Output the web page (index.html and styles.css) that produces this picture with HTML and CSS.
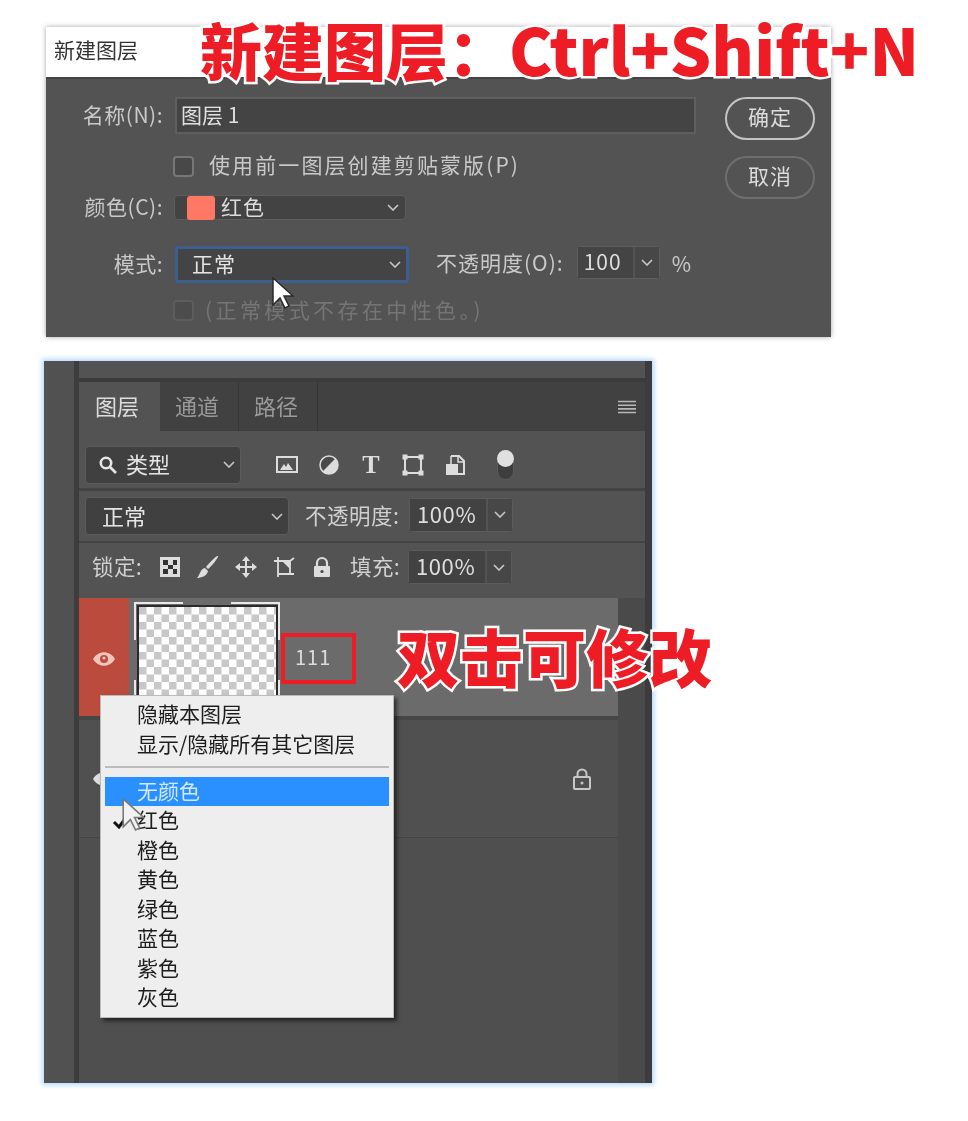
FILE: index.html
```html
<!DOCTYPE html>
<html lang="zh-CN">
<head>
<meta charset="utf-8">
<title>新建图层</title>
<link rel="stylesheet" href="styles.css">
</head>
<body>
<main class="page">
  <section class="dialog">
    <header class="dialog-title">新建图层</header>
    <div class="dialog-body">
      <div class="form">
        <div class="row row-name">
          <label class="label">名称(N):</label>
          <div class="text-input">图层 1</div>
        </div>
        <div class="row row-check">
          <span class="checkbox"></span>
          <span class="check-text">使用前一图层创建剪贴蒙版(P)</span>
        </div>
        <div class="row row-color">
          <label class="label">颜色(C):</label>
          <div class="color-select">
            <span class="swatch"></span><span class="color-name">红色</span>
            <svg class="chev" viewBox="0 0 12 7"><path d="M1 1l5 5 5-5"/></svg>
          </div>
        </div>
        <div class="row row-mode">
          <label class="label">模式:</label>
          <div class="mode-select">
            <span>正常</span>
            <svg class="chev" viewBox="0 0 12 7"><path d="M1 1l5 5 5-5"/></svg>
          </div>
          <span class="opacity-label">不透明度(O):</span>
          <div class="num-box dlg-num">
            <span class="num">100</span>
            <span class="num-arrow"><svg class="chev" viewBox="0 0 12 7"><path d="M1 1l5 5 5-5"/></svg></span>
          </div>
          <span class="percent">%</span>
        </div>
        <div class="row row-disabled">
          <span class="checkbox checkbox-off"></span>
          <span class="disabled-text">(正常模式不存在中性色。)</span>
        </div>
      </div>
      <div class="buttons">
        <div class="btn btn-primary">确定</div>
        <div class="btn">取消</div>
      </div>
    </div>
    <svg class="cursor cursor-dialog" viewBox="0 0 22 33"><path d="M1 1v27l7-7 5 10 4-2-5-10h9z"/></svg>
  </section>

  <section class="panel">
    <div class="strip"></div>
    <div class="strip-line"></div>
    <div class="panel-main">
      <div class="panel-top"></div>
      <nav class="tabs">
        <span class="tab tab-on">图层</span>
        <span class="tab">通道</span>
        <span class="tab">路径</span>
        <svg class="menu-icon" viewBox="0 0 18 14"><path d="M0 1.500h18M0 5.200h18M0 8.900h18M0 12.500h18"/></svg>
      </nav>
      <div class="p-row p-filter">
        <div class="p-select filter-select">
          <svg class="search" viewBox="0 0 20 20"><circle cx="8" cy="8" r="5.200"/><path d="M12 12l6 6"/></svg>
          <span>类型</span>
          <svg class="chev" viewBox="0 0 12 7"><path d="M1 1l5 5 5-5"/></svg>
        </div>
        <div class="filter-icons">
          <svg class="ficon" viewBox="0 0 24 24"><rect x="2" y="4" width="20" height="15" fill="none" stroke="#ddd" stroke-width="2"/><path d="M5 17l4-6 2 3 2-4 5 7z" fill="#ddd"/></svg>
          <svg class="ficon" viewBox="0 0 24 24"><circle cx="12" cy="12" r="9" fill="#ddd"/><path d="M18.400 5.600A9 9 0 0 0 5.600 18.400z" fill="#4a4a4a"/><circle cx="12" cy="12" r="9" fill="none" stroke="#ddd" stroke-width="1.500"/></svg>
          <span class="type-t">T</span>
          <svg class="ficon" viewBox="0 0 24 24"><rect x="4" y="4" width="16" height="16" fill="none" stroke="#ddd" stroke-width="2"/><rect x="1.500" y="1.500" width="5" height="5" fill="#ddd"/><rect x="17.500" y="1.500" width="5" height="5" fill="#ddd"/><rect x="1.500" y="17.500" width="5" height="5" fill="#ddd"/><rect x="17.500" y="17.500" width="5" height="5" fill="#ddd"/></svg>
          <svg class="ficon" viewBox="0 0 24 24"><path d="M8 3h8l5 5v13h-6" fill="none" stroke="#ddd" stroke-width="2"/><path d="M8 3v8M15 3v6h6" fill="none" stroke="#ddd" stroke-width="1.500"/><rect x="3" y="11" width="12" height="11" fill="#ddd"/></svg>
          <div class="toggle"><span class="toggle-dot"></span></div>
        </div>
      </div>
      <div class="p-row p-blend">
        <div class="p-select blend-select">
          <span>正常</span>
          <svg class="chev" viewBox="0 0 12 7"><path d="M1 1l5 5 5-5"/></svg>
        </div>
        <span class="p-label blend-label">不透明度:</span>
        <div class="num-box p-num">
          <span class="num">100%</span>
          <span class="num-arrow"><svg class="chev" viewBox="0 0 12 7"><path d="M1 1l5 5 5-5"/></svg></span>
        </div>
      </div>
      <div class="p-row p-lock">
        <span class="p-label lock-label">锁定:</span>
        <div class="lock-icons">
          <svg class="licon" viewBox="0 0 22 22"><rect x="1" y="1" width="20" height="20" fill="#ddd"/><path d="M4 4h5v5H4zM14 4h4v5h-4zM9 9h5v4H9zM4 13h5v5H4zM14 13h4v5h-4z" fill="#333"/></svg>
          <svg class="licon" viewBox="0 0 22 22"><path d="M21 0c1 1-6 10-10 13l-2-2C12 7 20-1 21 0z" fill="#ddd"/><path d="M8 12l3 3c-1 5-7 7-11 7 3-3 3-9 8-10z" fill="#ddd"/></svg>
          <svg class="licon" viewBox="0 0 22 22"><path d="M11 2v18M2 11h18" stroke="#ddd" stroke-width="2" fill="none"/><path d="M11 0l4 5H7zM11 22l-4-5h8zM0 11l5-4v8zM22 11l-5 4V7z" fill="#ddd"/></svg>
          <svg class="licon" viewBox="0 0 22 22"><path d="M1 5h16v13H5V1M5 18v3M17 18h4M17 5l4-3" fill="none" stroke="#ddd" stroke-width="1.800"/><path d="M9 5l8 8V5z" fill="#ddd"/></svg>
          <svg class="licon" viewBox="0 0 22 22"><path d="M6 10V7a5 5 0 0 1 10 0v3" fill="none" stroke="#ddd" stroke-width="2.200"/><rect x="3" y="10" width="16" height="11" rx="1" fill="#ddd"/><circle cx="11" cy="15.500" r="1.600" fill="#444"/></svg>
        </div>
        <span class="p-label fill-label">填充:</span>
        <div class="num-box p-num">
          <span class="num">100%</span>
          <span class="num-arrow"><svg class="chev" viewBox="0 0 12 7"><path d="M1 1l5 5 5-5"/></svg></span>
        </div>
      </div>
      <div class="layers">
        <div class="layer-list">
          <div class="layer layer-on">
            <div class="eye-cell">
              <svg class="eye eye-main" viewBox="0 0 24 16"><path d="M1 8c5-9 17-9 22 0-5 9-17 9-22 0z" fill="#eec4bc"/><circle cx="12" cy="8" r="4" fill="#bb4b3c"/><circle cx="12" cy="7" r="1.600" fill="#eec4bc"/></svg>
            </div>
            <svg class="thumb" viewBox="0 0 146 118">
              <defs>
                <pattern id="chk" width="15" height="15" patternUnits="userSpaceOnUse" x="5" y="9">
                  <rect width="15" height="15" fill="#fff"/>
                  <rect width="7.500" height="7.500" fill="#c8c8c8"/>
                  <rect x="7.500" y="7.500" width="7.500" height="7.500" fill="#c8c8c8"/>
                </pattern>
              </defs>
              <rect x="4" y="8" width="139" height="110" fill="url(#chk)" stroke="#2a2a2a" stroke-width="2"/>
              <path d="M1 42V5h48M97 5h48v37M1 82v36M145 82v36" fill="none" stroke="#e8e8e8" stroke-width="2"/>
            </svg>
            <div class="name-box"><span>111</span></div>
          </div>
          <div class="layer layer-off">
            <div class="eye-cell eye-plain">
              <svg class="eye" viewBox="0 0 24 16"><path d="M1 8c5-9 17-9 22 0-5 9-17 9-22 0z" fill="#ddd"/></svg>
            </div>
            <svg class="row-lock" viewBox="0 0 20 24"><path d="M5.500 10V7a4.500 4.500 0 0 1 9 0v3" fill="none" stroke="#c8c8c8" stroke-width="2"/><rect x="2" y="10" width="16" height="12" rx="1" fill="none" stroke="#c8c8c8" stroke-width="2"/><circle cx="10" cy="16" r="1.500" fill="#c8c8c8"/></svg>
          </div>
        </div>
      </div>
    </div>
    <div class="strip-right"></div>

    <div class="ctx-menu">
      <div class="ctx-item">隐藏本图层</div>
      <div class="ctx-item">显示/隐藏所有其它图层</div>
      <div class="ctx-sep"></div>
      <div class="ctx-item ctx-hover">无颜色</div>
      <div class="ctx-item ctx-checked">
        <svg class="tick" viewBox="0 0 18 16"><path d="M2 9l5 5L16 2" /></svg>红色
      </div>
      <div class="ctx-item">橙色</div>
      <div class="ctx-item">黄色</div>
      <div class="ctx-item">绿色</div>
      <div class="ctx-item">蓝色</div>
      <div class="ctx-item">紫色</div>
      <div class="ctx-item">灰色</div>
    </div>
    <svg class="cursor cursor-menu" viewBox="0 0 22 33"><path d="M1 1v27l7-7 5 10 4-2-5-10h9z"/></svg>
  </section>

  <div class="big big-title">新建图层：<span class="big-latin">Ctrl+Shift+N</span></div>
  <div class="big big-note">双击可修改</div>
</main>
</body>
</html>
```

FILE: styles.css
```css
* { box-sizing: border-box; }
html, body { margin: 0; background: #fff; }
body {
  font-family: "Noto Sans CJK SC", "Noto Sans", sans-serif;
  overflow: hidden;
}
.page {
  position: relative;
  width: 968px;
  height: 1121px;
  padding: 27px 0 0 44px;
}

/* dialog */
.dialog {
  position: relative;
  width: 785px;
  height: 310px;
  margin-left: 2px;
  background: #535353;
  box-shadow: 0 0 5px rgba(0, 0, 0, .35);
  color: #c9c9c9;
  font-size: 21px;
  filter: blur(.45px);
}
.dialog-title {
  height: 52px;
  padding-left: 8px;
  background: #fff;
  border-bottom: 2px solid #444;
  color: #333;
  font-size: 21px;
  line-height: 44px;
}
.dialog-body {
  display: flex;
  padding-top: 18px;
}
.form { width: 679px; }
.row { display: flex; align-items: center; }
.label {
  width: 117px;
  margin-right: 12px;
  padding-bottom: 4px;
  text-align: right;
  letter-spacing: .5px;
  white-space: nowrap;
}
.text-input {
  width: 521px;
  height: 37px;
  padding-left: 4px;
  background: #444;
  border: 2px solid #5f5f5f;
  color: #e0e0e0;
  line-height: 30px;
}
.row-check { height: 20px; margin-top: 22px; padding-left: 127px; }
.checkbox {
  width: 21px;
  height: 21px;
  border: 2px solid #777;
  border-radius: 4px;
  background: #484848;
  flex: none;
}
.check-text { margin-left: 15px; padding-bottom: 4px; letter-spacing: 2.1px; white-space: nowrap; }
.row-color { height: 25px; margin-top: 19px; }
.color-select {
  position: relative;
  display: flex;
  align-items: center;
  width: 232px;
  height: 25px;
  margin-left: -1px;
  padding-left: 12px;
  background: #434343;
  border: 1px solid #5c5c5c;
  border-radius: 4px;
  color: #dcdcdc;
}
.swatch {
  width: 28px;
  height: 24px;
  border-radius: 3px;
  background: #ff7866;
}
.color-name { margin-left: 6px; padding-bottom: 4px; letter-spacing: 1px; }
.chev {
  width: 12px;
  height: 7px;
  fill: none;
  stroke: #c8c8c8;
  stroke-width: 1.6;
  flex: none;
}
.color-select .chev { margin-left: auto; margin-right: 6px; }
.row-mode { height: 37px; margin-top: 26px; }
.mode-select {
  display: flex;
  align-items: center;
  width: 234px;
  height: 37px;
  padding-left: 14px;
  background: #444;
  border: 3px solid #3d5f90;
  border-radius: 3px;
  color: #e4e4e4;
}
.mode-select span { padding-bottom: 4px; letter-spacing: 1px; }
.mode-select .chev { margin-left: auto; margin-right: 5px; }
.opacity-label { margin-left: 27px; padding-bottom: 6px; letter-spacing: 1px; white-space: nowrap; }
.num-box { display: flex; align-items: stretch; }
.num {
  display: block;
  background: #444;
  color: #dedede;
}
.num-arrow {
  display: flex;
  align-items: center;
  justify-content: center;
  margin-left: 2px;
  background: #474747;
}
.dlg-num {
  width: 83px;
  height: 33px;
  margin: -4px 0 0 13px;
  border: 1px solid #5e5e5e;
  border-radius: 4px;
}
.dlg-num .num { width: 55px; padding-left: 6px; line-height: 28px; letter-spacing: 1px; }
.dlg-num .num-arrow { flex: 1; }
.percent { margin-left: 12px; padding-bottom: 4px; }
.row-disabled { height: 21px; margin-top: 17px; padding-left: 127px; }
.checkbox-off { border-color: #5d5d5d; background: #4c4c4c; }
.disabled-text { margin-left: 11px; padding-bottom: 4px; color: #757575; letter-spacing: 3.4px; white-space: nowrap; }
.buttons { display: flex; flex-direction: column; gap: 16px; }
.btn {
  width: 90px;
  height: 43px;
  border: 2px solid #6f6f6f;
  border-radius: 22px;
  color: #dcdcdc;
  text-align: center;
  line-height: 35px;
  letter-spacing: 1px;
}
.btn-primary { border-color: #c4c4c4; }
.cursor {
  position: absolute;
  width: 22px;
  height: 33px;
  fill: #fff;
  stroke: #2a2a2a;
  stroke-width: 1.5;
}
.cursor-dialog { left: 226px; top: 250px; }

/* panel */
.panel {
  position: relative;
  display: flex;
  width: 608px;
  height: 722px;
  margin-top: 24px;
  background: #4f4f4f;
  box-shadow: 0 0 5px 2px #b3d6ff;
  color: #d6d6d6;
  font-size: 22px;
  filter: blur(.4px);
}
.strip { width: 30px; background: #515151; }
.strip-line { width: 5px; background: #3d3d3d; }
.strip-right { width: 7px; background: #3c3c3c; }
.panel-main { width: 566px; display: flex; flex-direction: column; }
.panel-top { height: 21px; background: #535353; border-bottom: 4px solid #3b3b3b; }
.tabs {
  display: flex;
  align-items: center;
  height: 49px;
  background: #414141;
  color: #999;
}
.tab {
  width: 79px;
  height: 49px;
  padding-left: 15px;
  border-right: 1px solid #363636;
  line-height: 46px;
}
.tab-on { width: 81px; padding-left: 16px; background: #535353; color: #ddd; border-right: 0; }
.menu-icon {
  width: 18px;
  height: 14px;
  margin-left: auto;
  margin-right: 9px;
  stroke: #b8b8b8;
  stroke-width: 1.6;
}
.p-row {
  display: flex;
  align-items: center;
  background: #535353;
}
.p-filter { height: 60px; padding: 10px 0 0 6px; border-bottom: 3px solid #434343; }
.p-blend { height: 52px; padding-left: 6px; border-bottom: 2px solid #434343; }
.p-lock { height: 55px; padding: 0 0 7px 13px; }
.p-select {
  display: flex;
  align-items: center;
  height: 38px;
  background: #404040;
  border: 1px solid #5b5b5b;
  border-radius: 4px;
  color: #e4e4e4;
}
.p-select span { padding-bottom: 3px; }
.p-select .chev { margin-left: auto; margin-right: 5px; }
.filter-select { width: 156px; padding-left: 12px; }
.search {
  width: 20px;
  height: 20px;
  margin-right: 8px;
  fill: none;
  stroke: #e6e6e6;
  stroke-width: 2.6;
}
.filter-icons {
  display: flex;
  align-items: center;
  gap: 18px;
  margin-left: 34px;
}
.ficon { width: 24px; height: 24px; flex: none; }
.type-t {
  width: 24px;
  color: #ddd;
  font-family: "Liberation Serif", serif;
  font-size: 26px;
  font-weight: 700;
  line-height: 24px;
  text-align: center;
}
.toggle {
  position: relative;
  width: 17px;
  height: 30px;
  margin-left: 12px;
  background: #3e3e3e;
  border: 1px solid #5c5c5c;
  border-radius: 9px;
}
.toggle-dot {
  position: absolute;
  left: -1px;
  top: -1px;
  width: 17px;
  height: 17px;
  border-radius: 50%;
  background: #e0e0e0;
}
.blend-select { width: 204px; padding-left: 16px; }
.p-label { padding-bottom: 3px; white-space: nowrap; color: #d0d0d0; }
.blend-label { width: 95px; margin: 0 9px 0 16px; font-size: 21.500px; letter-spacing: .5px; }
.num-box.p-num { width: 104px; height: 34px; border: 1px solid #5b5b5b; border-radius: 4px; }
.p-blend .p-num { margin-top: -3px; }
.p-num .num { width: 76px; padding-left: 7px; line-height: 29px; background: #424242; letter-spacing: .6px; }
.p-num .num-arrow { flex: 1; background: #474747; }
.lock-label { width: 52px; font-size: 21.500px; letter-spacing: .4px; }
.lock-icons { display: flex; gap: 16px; margin-left: 15px; }
.licon { width: 22px; height: 22px; flex: none; }
.fill-label { width: 49px; margin: 0 9px 0 17px; font-size: 21.500px; letter-spacing: .4px; }
.layers { flex: 1; background: #4a4a4a; }
.layer-list { width: 539px; height: 100%; background: #4f4f4f; }
.layer { display: flex; align-items: center; height: 118px; }
.layer-on { height: 122px; background: #6b6b6b; border-bottom: 4px solid #464646; }
.layer-off { background: #505050; border-bottom: 1px solid #444; }
.eye-cell {
  display: flex;
  align-items: center;
  justify-content: center;
  width: 50px;
  height: 100%;
  background: #bb4b3c;
}
.eye-plain { background: transparent; }
.eye { width: 24px; height: 16px; }
.eye-main { margin-top: 4px; }
.thumb { width: 146px; height: 118px; margin-left: 5px; flex: none; }
.name-box {
  display: flex;
  align-items: center;
  width: 75px;
  height: 51px;
  margin: 2px 0 0 1px;
  padding-left: 10px;
  border: 4px solid #ee1c25;
  border-radius: 1px;
  color: #dcdcdc;
  font-size: 20px;
  letter-spacing: 1px;
}
.name-box span { padding-bottom: 3px; }
.row-lock { width: 20px; height: 24px; margin-left: auto; margin-right: 26px; }

/* context menu */
.ctx-menu {
  position: absolute;
  left: 56px;
  top: 334px;
  width: 294px;
  height: 323px;
  padding: 4px;
  background: #eee;
  border: 1px solid #bbb;
  box-shadow: 3px 3px 4px rgba(0, 0, 0, .55);
  color: #1d1d1d;
  font-size: 21px;
}
.ctx-item {
  position: relative;
  height: 29.500px;
  padding-left: 32px;
  line-height: 27px;
  white-space: nowrap;
}
.ctx-sep { height: 2px; margin: 7px 0 8.500px; background: #bcbcbc; }
.ctx-hover { background: #2b90ff; color: #d5e9ff; }
.tick {
  position: absolute;
  left: 7px;
  top: 7px;
  width: 18px;
  height: 16px;
  fill: none;
  stroke: #111;
  stroke-width: 3;
}
.cursor-menu { left: 78px; top: 437px; width: 23px; height: 34px; fill: #f2f2f2; stroke: #777; }

/* annotations */
.big {
  position: absolute;
  color: #ee1c25;
  font-weight: 900;
  font-size: 62px;
  line-height: 1;
  white-space: nowrap;
  -webkit-text-stroke: 5px #fff;
  paint-order: stroke fill;
}
.big-title { left: 200px; top: 16px; }
.big-latin { font-size: 65px; margin-left: -1px; }
.big-note { left: 397px; top: 623px; font-size: 63px; }
```
